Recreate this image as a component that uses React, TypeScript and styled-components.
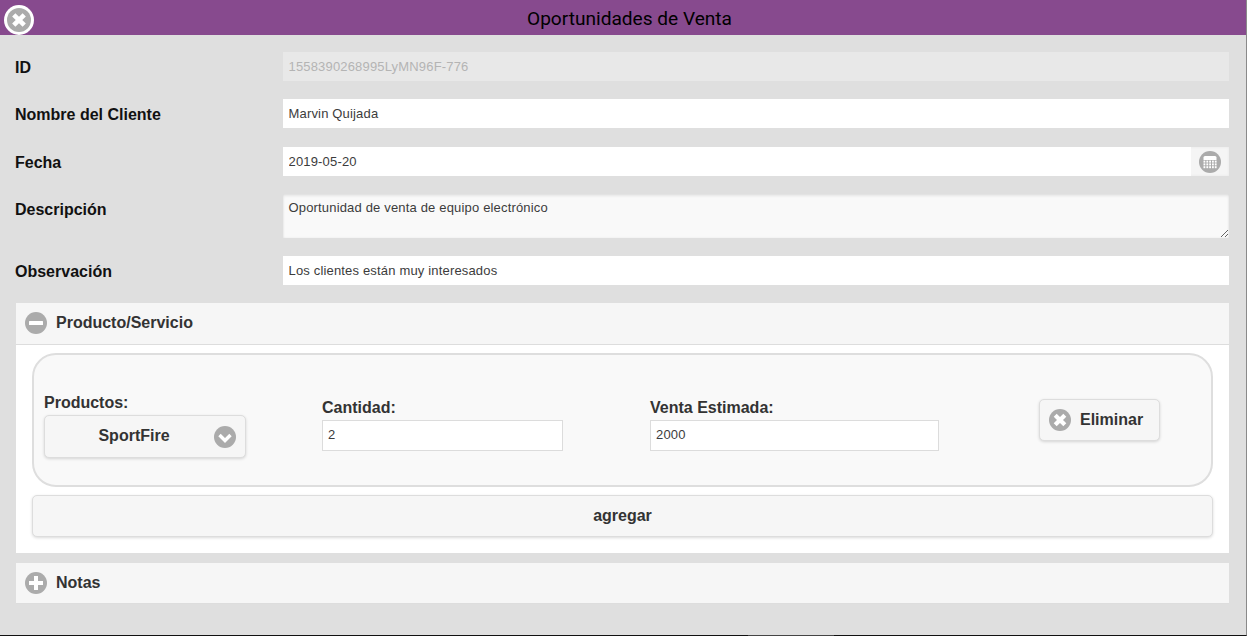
import React from "react";
import styled, { createGlobalStyle } from "styled-components";

const Global = createGlobalStyle`
  html, body { margin: 0; padding: 0; height: 100%; background: #dfdfdf; }
  * { box-sizing: border-box; }
  body { font-family: "Liberation Sans", Arial, sans-serif; overflow: hidden; }
`;

const Page = styled.div`
  position: relative;
  width: 1247px;
  height: 636px;
  background: #dfdfdf;
  border-right: 1px solid #8a8a8a;
  border-bottom: 1px solid #111;
`;

const BottomMark = styled.div`
  position: absolute;
  left: 748px;
  bottom: -1px;
  width: 86px;
  height: 1px;
  background: #444;
`;

const Header = styled.header`
  height: 35px;
  background: #874a8e;
  display: flex;
  align-items: center;
  justify-content: center;
  padding: 2px 0 0 13px;
`;

const Title = styled.h1`
  margin: 0;
  font: 400 19.1px/33px Roboto, sans-serif;
  color: #000;
`;

const CloseButton = styled.button`
  position: absolute;
  left: 4px;
  top: 5px;
  width: 30px;
  height: 30px;
  padding: 0;
  border: 0;
  border-radius: 50%;
  background: #fff;
  display: flex;
  align-items: center;
  justify-content: center;
`;

const Body = styled.main`
  padding: 17px 17px 0 15px;
  display: flex;
  flex-direction: column;
`;

const Row = styled.div<{ $after?: number }>`
  display: grid;
  grid-template-columns: 268px 1fr;
  align-items: start;
  margin-bottom: ${(p) => p.$after ?? 18}px;
`;

const Label = styled.label`
  display: block;
  height: 29px;
  font: 600 16px/31px "Liberation Sans", Arial, sans-serif;
  color: #111;
`;

const fieldText = `
  font: 400 13px/16px "Liberation Sans", Arial, sans-serif;
  letter-spacing: 0.17px;
  color: #3c3c3c;
`;

const TextField = styled.input<{ $disabled?: boolean }>`
  ${fieldText}
  display: block;
  width: 100%;
  height: 29px;
  padding: 0 5.5px;
  border: 0;
  outline: 0;
  background: ${(p) => (p.$disabled ? "#e8e8e8" : "#fff")};
  color: ${(p) => (p.$disabled ? "#b4b4b4" : "#3c3c3c")};
`;

const DateWrap = styled.div`
  display: flex;
  height: 29px;
  background: #f5f5f5;
  box-shadow: inset 0 0 3px rgba(0, 0, 0, 0.06);
`;

const DateIcon = styled.div`
  width: 38px;
  flex: none;
  display: flex;
  align-items: center;
  justify-content: center;
`;

const TextArea = styled.textarea`
  ${fieldText}
  display: block;
  width: 100%;
  height: 44px;
  padding: 6px 5.5px;
  border: 0;
  outline: 0;
  background: #f9f9f9;
  box-shadow: inset 0 2px 3px rgba(0, 0, 0, 0.08), inset 0 0 2px rgba(0, 0, 0, 0.08);
  resize: vertical;
`;

const Section = styled.section<{ $after?: number }>`
  margin: 0 0 ${(p) => p.$after ?? 0}px 1px;
`;

const SectionHead = styled.div<{ $open?: boolean }>`
  height: ${(p) => (p.$open ? 42 : 41)}px;
  background: #f6f6f6;
  border-bottom: 1px solid #dddddd;
  display: flex;
  align-items: center;
  gap: 9px;
  padding: 0 0 1px 9px;
  font: 700 16px/20px "Liberation Sans", Arial, sans-serif;
  color: #333;
`;

const SectionBody = styled.div`
  background: #fff;
  height: 208px;
  padding: 8px 16px 16px 16px;
  display: flex;
  flex-direction: column;
  gap: 8px;
`;

const Card = styled.div`
  height: 134px;
  border: 2px solid #dedede;
  border-radius: 24px;
  background: #f9f9f9;
  display: grid;
  grid-template-columns: 278px 328px 389px 1fr;
  padding: 0 0 0 10px;
`;

const Cell = styled.div<{ $top: number }>`
  padding-top: ${(p) => p.$top}px;
`;

const FieldLabel = styled.div`
  font: 600 16px/18px "Liberation Sans", Arial, sans-serif;
  color: #333;
  margin-bottom: 3px;
`;

const SmallInput = styled.input<{ $w: number }>`
  ${fieldText}
  display: block;
  width: ${(p) => p.$w}px;
  height: 31px;
  padding: 0 5px 2px;
  border: 1px solid #dcdcdc;
  outline: 0;
  background: #fff;
`;

const RaisedButton = styled.button`
  border: 1px solid #dddddd;
  border-radius: 5px;
  background: #f6f6f6;
  box-shadow: 0 1px 3px rgba(0, 0, 0, 0.15);
  color: #333;
  font: 700 16px/20px "Liberation Sans", Arial, sans-serif;
  padding: 0;
`;

const SelectButton = styled(RaisedButton)`
  position: relative;
  width: 202px;
  height: 43px;
  padding: 0 22px 2px 0;
  display: flex;
  align-items: center;
  justify-content: center;
`;

const SelectArrow = styled.span`
  position: absolute;
  right: 9px;
  top: 10px;
  display: flex;
`;

const DeleteButton = styled(RaisedButton)`
  width: 121px;
  height: 42px;
  padding-left: 9px;
  display: flex;
  align-items: center;
  gap: 9px;
`;

const AddButton = styled(RaisedButton)`
  height: 42px;
  width: 100%;
  flex: none;
`;

const RoundIcon = styled.svg.attrs({ viewBox: "0 0 22 22" })<{ $size?: number }>`
  width: ${(p) => p.$size ?? 22}px;
  height: ${(p) => p.$size ?? 22}px;
  flex: none;
  display: block;
`;

const Close = ({ size }: { size?: number }) => (
  <RoundIcon $size={size}>
    <circle cx="11" cy="11" r="11" fill="#ababab" />
    <path d="M6.2 6.2L15.8 15.8M15.8 6.2L6.2 15.8" stroke="#fff" strokeWidth="4.2" strokeLinecap="butt" />
  </RoundIcon>
);

const Minus = () => (
  <RoundIcon>
    <circle cx="11" cy="11" r="11" fill="#ababab" />
    <rect x="4" y="9" width="14" height="4" fill="#fff" rx="0.5" />
  </RoundIcon>
);

const Plus = () => (
  <RoundIcon>
    <circle cx="11" cy="11" r="11" fill="#ababab" />
    <path d="M9 4h4v5h5v4h-5v5H9v-5H4V9h5z" fill="#fff" />
  </RoundIcon>
);

const Chevron = () => (
  <RoundIcon>
    <circle cx="11" cy="11" r="11" fill="#ababab" />
    <path d="M5.5 9L11 14.5L16.5 9" fill="none" stroke="#fff" strokeWidth="3.4" />
  </RoundIcon>
);

const Calendar = () => (
  <RoundIcon>
    <circle cx="11" cy="11" r="11" fill="#ababab" />
    <path d="M4.5 9V6.5Q4.5 5 6 5H16Q17.5 5 17.5 6.5V9z" fill="#fff" />
    <g fill="#fff">
      {[9.6, 12.4, 15.2].map((y) =>
        [4.5, 7.4, 10.2, 13, 15.8].map((x) => <rect key={`${x}-${y}`} x={x} y={y} width="1.8" height="2" />)
      )}
    </g>
  </RoundIcon>
);

export default function App() {
  return (
    <Page>
      <Global />
      <Header>
        <Title>Oportunidades de Venta</Title>
      </Header>
      <CloseButton aria-label="Cerrar">
        <Close size={24} />
      </CloseButton>
      <Body>
        <Row>
          <Label>ID</Label>
          <TextField $disabled readOnly value="1558390268995LyMN96F-776" />
        </Row>
        <Row $after={19}>
          <Label>Nombre del Cliente</Label>
          <TextField readOnly value="Marvin Quijada" />
        </Row>
        <Row>
          <Label>Fecha</Label>
          <DateWrap>
            <TextField readOnly value="2019-05-20" />
            <DateIcon>
              <Calendar />
            </DateIcon>
          </DateWrap>
        </Row>
        <Row>
          <Label>Descripción</Label>
          <TextArea readOnly value="Oportunidad de venta de equipo electrónico" />
        </Row>
        <Row>
          <Label>Observación</Label>
          <TextField readOnly value="Los clientes están muy interesados" />
        </Row>
        <Section $after={10}>
          <SectionHead $open>
            <Minus />
            Producto/Servicio
          </SectionHead>
          <SectionBody>
            <Card>
              <Cell $top={39}>
                <FieldLabel>Productos:</FieldLabel>
                <SelectButton>
                  SportFire
                  <SelectArrow>
                    <Chevron />
                  </SelectArrow>
                </SelectButton>
              </Cell>
              <Cell $top={44}>
                <FieldLabel>Cantidad:</FieldLabel>
                <SmallInput $w={241} readOnly value="2" />
              </Cell>
              <Cell $top={44}>
                <FieldLabel>Venta Estimada:</FieldLabel>
                <SmallInput $w={289} readOnly value="2000" />
              </Cell>
              <Cell $top={44}>
                <DeleteButton>
                  <Close />
                  Eliminar
                </DeleteButton>
              </Cell>
            </Card>
            <AddButton>agregar</AddButton>
          </SectionBody>
        </Section>
        <Section>
          <SectionHead>
            <Plus />
            Notas
          </SectionHead>
        </Section>
      </Body>
      <BottomMark />
    </Page>
  );
}
